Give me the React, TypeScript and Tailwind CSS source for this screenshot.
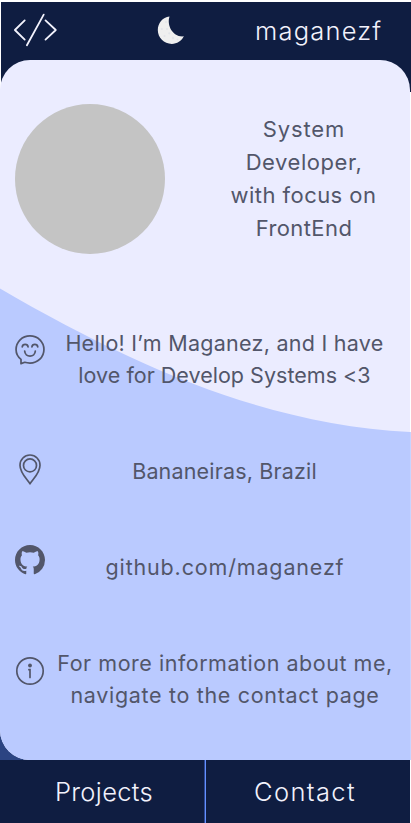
import type { ReactNode } from "react";
import { BsGithub } from "react-icons/bs";

function Line({ children, className }: { children: ReactNode; className: string }) {
  return <span className={`block whitespace-nowrap ${className}`}>{children}</span>;
}

function Row({ icon, children }: { icon: ReactNode; children: ReactNode }) {
  return (
    <div className="flex">
      <div className="flex w-[60px] shrink-0 justify-center">{icon}</div>
      <p className="flex w-[329px] flex-col items-center text-[21.5px] leading-8">{children}</p>
    </div>
  );
}

function CodeIcon() {
  return (
    <svg className="h-[36px] w-[46px]" viewBox="0 0 46 36" fill="none" stroke="#f2f2fc" strokeWidth="1.8" strokeLinecap="round" strokeLinejoin="round">
      <path d="M12.7 8.4 2.9 18l9.8 9.6M33.5 8.4 43.8 18l-10.3 9.6M31.7 2.6 14.9 33.2" />
    </svg>
  );
}

function MoonIcon() {
  return (
    <svg className="h-[28px] w-[27px]" viewBox="0 0 27 28">
      <path fill="#efefef" d="M12.5.5C9.5 9.5 16 21.5 26.8 20.3 24.5 25 20 27.9 14.8 27.9 7 27.9.8 21.7.8 14 .8 7.3 5.5 1.3 12.5.5Z" />
      <g fill="#e2e4e9">
        <circle cx="9" cy="6" r="1" />
        <circle cx="4.8" cy="13" r="1.1" />
        <circle cx="10" cy="13" r="1" />
        <circle cx="12.3" cy="17.3" r="1.1" />
        <circle cx="7.5" cy="20" r="1.1" />
        <circle cx="16" cy="22" r="1.2" />
        <circle cx="20.5" cy="23.5" r=".9" />
      </g>
    </svg>
  );
}

function SmileIcon() {
  return (
    <svg className="mt-2 h-[30px] w-[30px]" viewBox="0 0 31 31" fill="none" stroke="currentColor" strokeWidth="1.8" strokeLinecap="round" strokeLinejoin="round">
      <path d="M6.2 29.6V25.2C2.9 22.7 1.1 19.2 1.1 15.1 1.1 7 7.4.9 15.5.9s14.4 6.2 14.4 14.1-6.4 14-14.4 14c-2.1 0-3.7-.2-5.4-.8Z" />
      <path d="M7.5 12.2c.4-3.4 5.6-3.4 6 0M17.5 12.2c.4-3.4 5.6-3.4 6 0M10 16.6c.3 7 10.7 7 11 0" />
    </svg>
  );
}

function PinIcon() {
  return (
    <svg className="-mt-[1px] h-[31px] w-[22px]" viewBox="0 0 22 31" fill="none" stroke="currentColor" strokeWidth="1.7" strokeLinejoin="round">
      <path d="M11 29.8C8.5 25.5 1 19.2 1 11.2a10 10.2 0 0 1 20 0c0 8-7.5 14.3-10 18.6Z" />
      <circle cx="11" cy="11.4" r="6.5" />
    </svg>
  );
}

function InfoIcon() {
  return (
    <svg className="mt-[9px] h-[30px] w-[30px]" viewBox="0 0 30 30" fill="none" stroke="currentColor" strokeWidth="1.7">
      <circle cx="15" cy="15" r="13.2" />
      <circle cx="15" cy="9.5" r="1.9" fill="currentColor" stroke="none" />
      <path d="M13.9 13.7H15V21.5" strokeLinecap="round" />
    </svg>
  );
}

export default function App() {
  return (
    <div className="h-[823px] w-[411px] overflow-hidden bg-white pt-[2px] font-['Inter',sans-serif] text-[#52566a]">
      <header className="ml-px flex h-[90px] w-[410px] bg-[#0f1d41] text-[#f2f2fc]">
        <div className="ml-[11px] mt-[10px] w-[46px]">
          <CodeIcon />
        </div>
        <div className="ml-[99px] mt-[14px] w-[27px]">
          <MoonIcon />
        </div>
        <div className="ml-[71px] mt-[11px] text-[25.5px] font-[350] leading-9">
          <Line className="tracking-[1.2px]">maganezf</Line>
        </div>
      </header>

      <div className="relative -mt-8 h-[700px] w-[411px]">
        <div className="absolute bottom-0 left-0 h-8 w-8 bg-[#2b4482]" />
        <div className="absolute bottom-0 right-0 h-[328px] w-px bg-[#c8d4ff]" />
        <main className="relative h-[700px] w-[410px] overflow-hidden rounded-l-[30px] rounded-tr-[30px] bg-[#ebecff]">
          <svg className="absolute left-0 top-0 h-[700px] w-[410px]" viewBox="0 0 410 700">
            <path fill="#bacaff" d="M0 228.5C140 310 270 365 410 372V700H0Z" />
          </svg>
          <div className="relative flex h-[267px]">
            <div className="ml-[15px] mt-[44px] size-[150px] shrink-0 rounded-full bg-[#c4c4c4]" />
            <h1 className="ml-[58px] mt-[53px] flex w-[161px] flex-col items-center text-[22px] leading-[33px]">
              <Line className="-mr-px tracking-[0.85px]">System</Line>
              <Line className="-mr-px tracking-[0.55px]">Developer,</Line>
              <Line className="tracking-[0.45px]">with focus on</Line>
              <Line className="-mr-px tracking-[0.4px]">FrontEnd</Line>
            </h1>
          </div>
          <div className="relative flex flex-col gap-16">
            <Row icon={<SmileIcon />}>
              <Line className="tracking-[0.27px]">Hello! I’m Maganez, and I have</Line>
              <Line className="tracking-[0.02px]">love for Develop Systems &lt;3</Line>
            </Row>
            <Row icon={<PinIcon />}>
              <Line className="tracking-[0.17px]">Bananeiras, Brazil</Line>
            </Row>
            <Row icon={<BsGithub className="-mt-[6px] size-[30px]" />}>
              <Line className="-mr-px tracking-[0.84px]">github.com/maganezf</Line>
            </Row>
            <Row icon={<InfoIcon />}>
              <Line className="-mr-px tracking-[0.52px]">For more information about me,</Line>
              <Line className="-mr-px tracking-[0.68px]">navigate to the contact page</Line>
            </Row>
          </div>
        </main>
      </div>

      <footer className="flex h-[63px] w-[410px] bg-[#0f1d41] text-[25.5px] font-[350] leading-9 text-[#f2f2fc]">
        <div className="flex w-[205px] items-center justify-center border-r border-[#2f4a93] pl-1">
          <Line className="tracking-[0.35px]">Projects</Line>
        </div>
        <div className="flex w-[205px] items-center justify-center border-l border-[#6490ff] pr-[9px]">
          <Line className="-mr-[2px] ml-px tracking-[1.35px]">Contact</Line>
        </div>
      </footer>
    </div>
  );
}
